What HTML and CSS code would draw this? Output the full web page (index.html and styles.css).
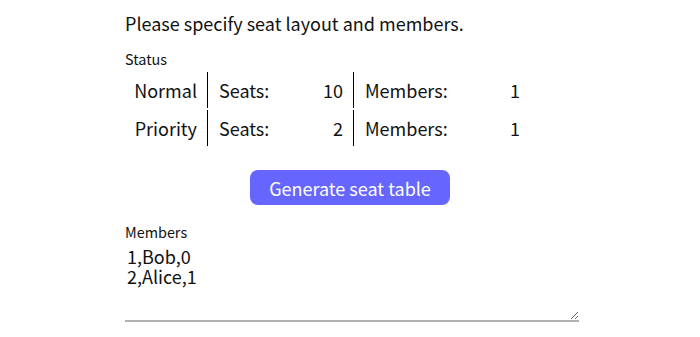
FILE: index.html
```html
<!DOCTYPE html>
<html>
<head>
<meta charset="utf-8">
<link rel="stylesheet" href="styles.css">
</head>
<body>
<main class="page">
  <p class="intro">Please specify seat layout and members.</p>
  <div class="label">Status</div>
  <table class="status">
    <tr>
      <td class="kind">Normal</td>
      <td class="sep seats">Seats:</td>
      <td class="num seatnum">10</td>
      <td class="sep mems">Members:</td>
      <td class="num memnum">1</td>
    </tr>
    <tr>
      <td class="kind">Priority</td>
      <td class="sep seats">Seats:</td>
      <td class="num seatnum">2</td>
      <td class="sep mems">Members:</td>
      <td class="num memnum">1</td>
    </tr>
  </table>
  <div class="actions"><button class="generate">Generate seat table</button></div>
  <div class="label members-label">Members</div>
  <textarea class="members">1,Bob,0
2,Alice,1</textarea>
</main>
</body>
</html>
```
FILE: styles.css
```css
html, body {
  margin: 0;
  padding: 0;
  background: #fff;
}
body {
  font-family: "Noto Sans CJK JP", "Noto Sans", sans-serif;
  color: #111;
}
.page {
  width: 454px;
  margin-left: 125px;
  padding-top: 11px;
}
.intro {
  margin: 0;
  font-size: 18px;
  line-height: 24px;
}
.label {
  font-size: 14.4px;
  line-height: 18px;
  margin-top: 15px;
}
.status {
  border-collapse: separate;
  border-spacing: 0 2px;
  margin-top: 2px;
  font-size: 18px;
}
.status td {
  height: 36px;
  padding: 0;
  white-space: nowrap;
}
.status .kind {
  width: 70px;
  padding: 0 10px 0 2px;
  text-align: right;
}
.status .sep {
  border-left: 1px solid #000;
}
.status .seats {
  width: 60px;
  padding-left: 11px;
}
.status .seatnum {
  width: 64px;
  padding-right: 10px;
  text-align: right;
}
.status .mems {
  width: 90px;
  padding-left: 11px;
}
.status .memnum {
  width: 65px;
  padding-right: 10px;
  text-align: right;
}
.actions {
  display: flex;
  justify-content: center;
  margin-top: 22px;
  padding-right: 4px;
}
.generate {
  font-family: inherit;
  font-size: 18px;
  color: #fff;
  background: #6666ff;
  border: none;
  border-radius: 8px;
  width: 200px;
  height: 35px;
  padding: 0;
}
.members-label {
  margin-top: 18px;
}
.members {
  display: block;
  box-sizing: border-box;
  width: 454px;
  height: 78px;
  margin: 3px 0 0;
  padding: 2px 2px 0;
  font-family: inherit;
  font-size: 18px;
  line-height: 20px;
  color: #111;
  border: none;
  border-bottom: 2px solid #b0b0b0;
  outline: none;
  resize: vertical;
}
```
